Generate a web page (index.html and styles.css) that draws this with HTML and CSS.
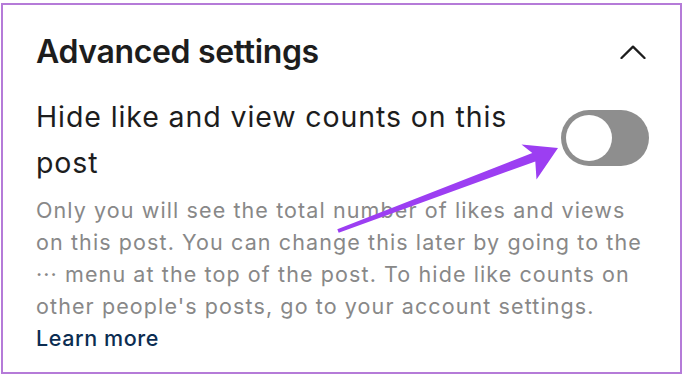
FILE: index.html
```html
<!DOCTYPE html>
<html lang="en">
<head>
<meta charset="utf-8">
<title>Advanced settings</title>
<link rel="stylesheet" href="styles.css">
</head>
<body>
<section class="panel">
  <header class="panel-head">
    <h2 class="panel-title">Advanced settings</h2>
    <button class="collapse" aria-label="Collapse">
      <svg width="26" height="14" viewBox="0 0 26 14"><path d="M1.5 13 L13 1.6 L24.5 13" fill="none" stroke="#1d1d1d" stroke-width="2.3" stroke-linecap="round" stroke-linejoin="round"/></svg>
    </button>
  </header>
  <div class="setting-row">
    <p class="setting-label">Hide like and view counts on this post</p>
    <span class="toggle" role="switch" aria-checked="false"><span class="knob"></span></span>
  </div>
  <p class="setting-desc">Only you will see the total number of likes and views on this post. You can change this later by going to the ··· menu at the top of the post. To hide like counts on other people's posts, go to your account settings. <a class="learn" href="#">Learn more</a></p>
</section>
<svg class="annot" width="686" height="376" viewBox="0 0 686 376" aria-hidden="true">
  <polygon points="337.3,229.2 532.3,153.0 521.5,144.5 558,148 536.5,179.5 535.3,161.4 338.7,232.8" fill="#9c3ef2"/>
</svg>
</body>
</html>
```
FILE: styles.css
```css
html, body {
  margin: 0;
  padding: 0;
  background: #ffffff;
}
body {
  position: relative;
  width: 686px;
  height: 376px;
  overflow: hidden;
  font-family: "Inter", "Liberation Sans", sans-serif;
}
.panel {
  box-sizing: border-box;
  margin: 3px 0 0 1px;
  width: 681px;
  height: 371px;
  border: 2px solid #b57bd8;
  padding: 27px 31px 0 33px;
}
.panel-head {
  display: flex;
  justify-content: space-between;
  align-items: center;
  height: 40px;
}
.panel-title {
  margin: 0;
  font-size: 32px;
  line-height: 40px;
  font-weight: 600;
  letter-spacing: -0.35px;
  color: #1d1d1d;
}
.collapse {
  border: 0;
  background: none;
  padding: 0;
  margin: 0 3px 0 0;
  width: 26px;
  height: 14px;
  display: block;
}
.collapse svg { display: block; }
.setting-row {
  display: flex;
  align-items: flex-start;
  justify-content: space-between;
  margin-top: 22px;
}
.setting-label {
  margin: 0;
  width: 500px;
  font-size: 28.5px;
  line-height: 46px;
  letter-spacing: 0.9px;
  color: #1d1d1d;
}
.toggle {
  box-sizing: border-box;
  display: block;
  margin-top: 16px;
  width: 88px;
  height: 56px;
  border-radius: 28px;
  background: #8e8e8e;
  padding: 5px;
}
.knob {
  display: block;
  width: 46px;
  height: 46px;
  border-radius: 50%;
  background: #ffffff;
}
.setting-desc {
  margin: 8px 0 0;
  font-size: 21.5px;
  line-height: 32px;
  letter-spacing: 1.1px;
  color: #888888;
}
.learn {
  display: block;
  color: #0c2d52;
  font-weight: 500;
  letter-spacing: 0.6px;
  text-decoration: none;
}
.annot {
  position: absolute;
  left: 0;
  top: 0;
  pointer-events: none;
}
```
